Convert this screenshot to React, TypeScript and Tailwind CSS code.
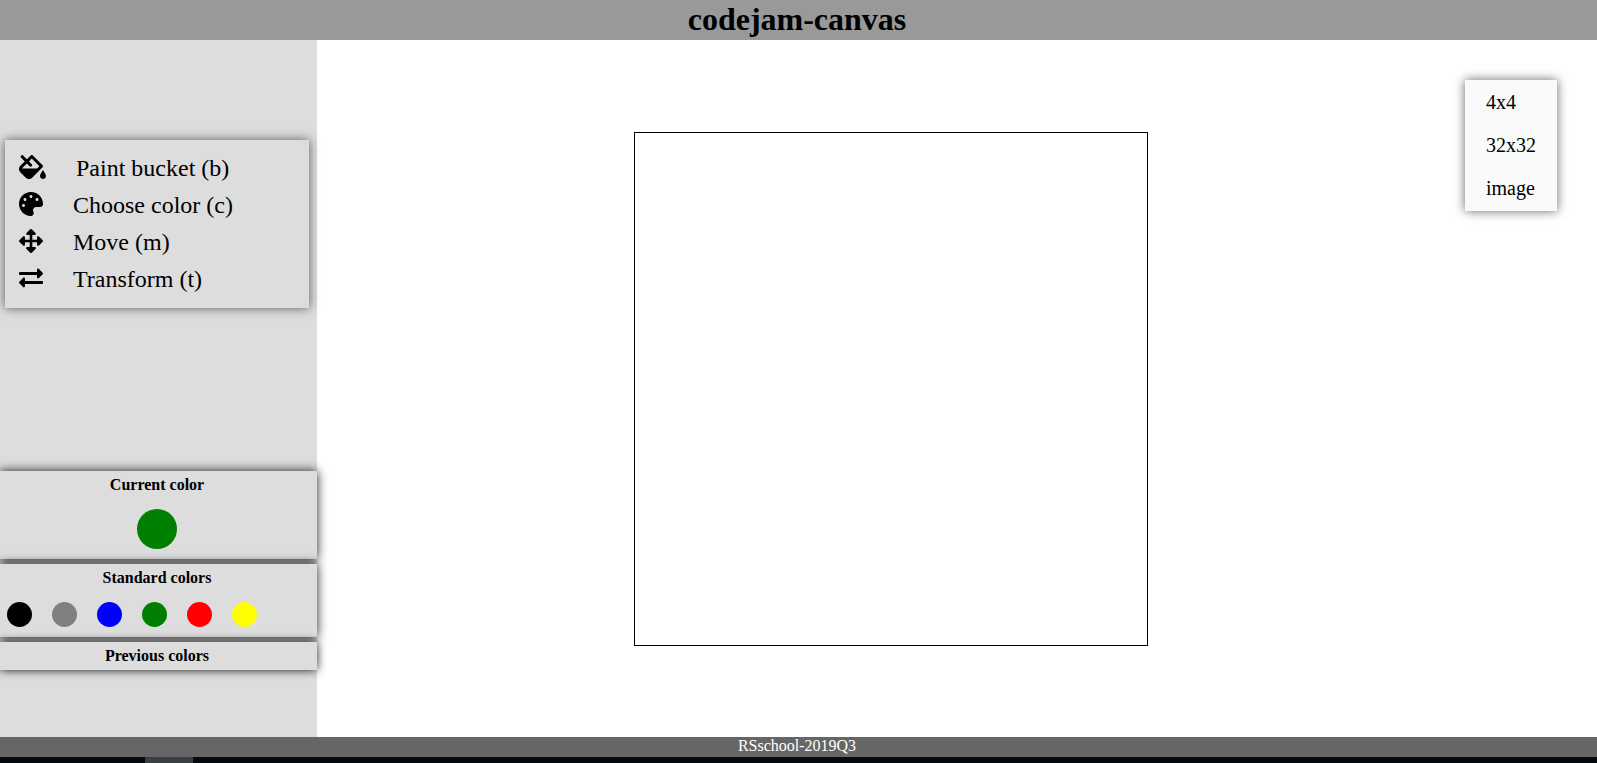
import { useState } from "react";
import type { ReactNode } from "react";
import { FaArrowsAlt, FaExchangeAlt, FaFillDrip, FaPalette } from "react-icons/fa";

const tools = [
  { label: "Paint bucket (b)", icon: <FaFillDrip className="mb-0.5 h-6 w-[27px]" /> },
  { label: "Choose color (c)", icon: <FaPalette className="mb-0.5 size-6" /> },
  { label: "Move (m)", icon: <FaArrowsAlt className="mb-0.5 size-6" /> },
  { label: "Transform (t)", icon: <FaExchangeAlt className="mb-0.5 size-6" /> },
];

const colors = [
  { name: "Black", fill: "bg-[#000000]" },
  { name: "Gray", fill: "bg-[#808080]" },
  { name: "Blue", fill: "bg-[#0000ff]" },
  { name: "Green", fill: "bg-[#008000]" },
  { name: "Red", fill: "bg-[#ff0000]" },
  { name: "Yellow", fill: "bg-[#ffff00]" },
];

const sizes = ["4x4", "32x32", "image"];

function ColorPanel({ title, children }: { title: string; children?: ReactNode }) {
  return (
    <section className="bg-[#ddd] py-[5px] shadow-[0_0_10px_rgba(0,0,0,0.9)]">
      <h2 className="pr-[3px] text-center text-base leading-[18px] font-bold">{title}</h2>
      {children}
    </section>
  );
}

export default function App() {
  const [current, setCurrent] = useState(colors[3]);

  return (
    <div className="flex min-h-screen flex-col bg-white font-['Liberation_Serif','Times_New_Roman',serif] text-black">
      <header className="bg-[#999] pr-[3px] pb-0.5">
        <h1 className="text-center text-[32px] leading-[38px] font-bold">codejam-canvas</h1>
      </header>

      <div className="flex flex-1">
        <aside className="flex w-[317px] shrink-0 flex-col bg-[#ddd] pt-[100px] pb-[67px]">
          <ul className="mr-2 ml-[5px] px-[14px] pt-[9px] pb-[11px] shadow-[0_0_10px_rgba(0,0,0,0.6)]">
            {tools.map((tool) => (
              <li key={tool.label}>
                <button type="button" className="flex h-[37px] items-center gap-[30px] text-2xl">
                  {tool.icon}
                  {tool.label}
                </button>
              </li>
            ))}
          </ul>

          <div className="mt-auto flex flex-col gap-[5px]">
            <ColorPanel title="Current color">
              <div className="flex justify-center pt-[15px] pr-[3px] pb-[5px]">
                <div role="img" aria-label={current.name} className={`size-10 rounded-full ${current.fill}`} />
              </div>
            </ColorPanel>
            <ColorPanel title="Standard colors">
              <div className="flex gap-5 px-[7px] pt-[15px] pb-[5px]">
                {colors.map((color) => (
                  <button
                    key={color.name}
                    type="button"
                    aria-label={color.name}
                    onClick={() => setCurrent(color)}
                    className={`size-[25px] rounded-full ${color.fill}`}
                  />
                ))}
              </div>
            </ColorPanel>
            <ColorPanel title="Previous colors" />
          </div>
        </aside>

        <main className="grid flex-1 grid-cols-[1fr_auto_1fr_auto] items-center pr-10">
          <canvas width={512} height={512} className="col-start-2 border border-black" />
          <ul className="col-start-4 mt-10 self-start bg-[#fafafa] px-[21px] pb-0.5 shadow-[0_0_10px_rgba(0,0,0,0.6)]">
            {sizes.map((size) => (
              <li key={size}>
                <button type="button" className="h-[43px] text-xl">
                  {size}
                </button>
              </li>
            ))}
          </ul>
        </main>
      </div>

      <footer className="bg-[#666] pr-[3px] pb-0.5 text-center text-base leading-[18px] text-white">
        RSschool-2019Q3
      </footer>
      <div className="h-1.5 bg-[#040b10] pl-[145px]">
        <div className="h-full w-12 bg-[#3a3f42]" />
      </div>
    </div>
  );
}
